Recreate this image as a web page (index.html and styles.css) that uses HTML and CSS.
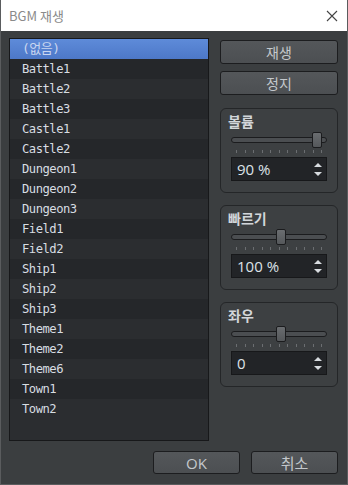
FILE: index.html
```html
<!DOCTYPE html>
<html>
	<head>
		<meta charset="utf-8">
		<title>BGM 재생</title>
		<link rel="stylesheet" href="styles.css">
	</head>
	<body>
		<div class = "window">
			<div class = "titlebar">
				<span class = "title">BGM 재생</span>
				<svg class = "close" width="12" height="12" viewBox="0 0 12 12">
					<path d="M1 1 L11 11 M11 1 L1 11" stroke="#444" stroke-width="1.1" fill="none"/>
				</svg>
			</div>

			<div class = "content">
				<!--The track list-->
				<ul class = "tracks">
					<li class = "selected">(없음)</li>
					<li>Battle1</li>
					<li>Battle2</li>
					<li>Battle3</li>
					<li>Castle1</li>
					<li>Castle2</li>
					<li>Dungeon1</li>
					<li>Dungeon2</li>
					<li>Dungeon3</li>
					<li>Field1</li>
					<li>Field2</li>
					<li>Ship1</li>
					<li>Ship2</li>
					<li>Ship3</li>
					<li>Theme1</li>
					<li>Theme2</li>
					<li>Theme6</li>
					<li>Town1</li>
					<li>Town2</li>
				</ul>

				<!--Controls-->
				<div class = "side">
					<button class = "btn">재생</button>
					<button class = "btn">정지</button>

					<div class = "group first">
						<div class = "label">볼륨</div>
						<div class = "slider">
							<div class = "groove"></div>
							<div class = "handle" style="left: 81px"></div>
						</div>
						<div class = "ticks"><i></i><i></i><i></i><i></i><i></i><i></i><i></i><i></i><i></i><i></i><i></i></div>
						<div class = "spin"><span>90 %</span><span class = "arrows"><b class = "up"></b><b class = "down"></b></span></div>
					</div>

					<div class = "group">
						<div class = "label">빠르기</div>
						<div class = "slider">
							<div class = "groove"></div>
							<div class = "handle" style="left: 45px"></div>
						</div>
						<div class = "ticks"><i></i><i></i><i></i><i></i><i></i><i></i><i></i><i></i><i></i><i></i><i></i></div>
						<div class = "spin"><span>100 %</span><span class = "arrows"><b class = "up"></b><b class = "down"></b></span></div>
					</div>

					<div class = "group">
						<div class = "label">좌우</div>
						<div class = "slider">
							<div class = "groove"></div>
							<div class = "handle" style="left: 45px"></div>
						</div>
						<div class = "ticks"><i></i><i></i><i></i><i></i><i></i><i></i><i></i><i></i><i></i><i></i><i></i></div>
						<div class = "spin"><span>0</span><span class = "arrows"><b class = "up"></b><b class = "down"></b></span></div>
					</div>
				</div>
			</div>

			<div class = "footer">
				<button class = "btn">OK</button>
				<button class = "btn">취소</button>
			</div>
		</div>
	</body>
</html>
```

FILE: styles.css
```css
body {
	margin: 0;
	font-family: "Noto Sans CJK KR", "Open Sans", sans-serif;
}

.window {
	width: 348px;
	height: 485px;
	box-sizing: border-box;
	border: 1px solid #5a5c5e;
	border-top: none;
	background-color: #3b3e40;
	display: flex;
	flex-direction: column;
}

/*Title bar*/
.titlebar {
	height: 31px;
	background-color: #ffffff;
	display: flex;
	align-items: center;
	justify-content: space-between;
	padding: 0 9px 0 8px;
	flex-shrink: 0;
}

.title {
	font-size: 13px;
	color: #8a8a8a;
}

/*Main area*/
.content {
	display: flex;
	padding: 7px 9px 0 8px;
	gap: 11px;
}

.tracks {
	list-style: none;
	margin: 0;
	padding: 0;
	width: 200px;
	height: 403px;
	box-sizing: border-box;
	border: 1px solid #17181a;
	background-color: #2b2d30;
	font-family: "DejaVu Sans Mono", "Noto Sans CJK KR", monospace;
	font-size: 12.2px;
	letter-spacing: -0.5px;
	color: #d8dde2;
}

.tracks li {
	height: 20px;
	line-height: 20px;
	padding-left: 12px;
	background-color: #2b2d30;
}

.tracks li:nth-child(even) {
	background-color: #25272a;
}

.tracks li.selected {
	background: linear-gradient(#5e8bd9, #4d78c8);
	color: #c9d6f0;
	font-size: 13px;
}

.side {
	width: 118px;
	margin-top: 2px;
	display: flex;
	flex-direction: column;
}

.btn {
	font-family: "Noto Sans CJK KR", "Open Sans", sans-serif;
	font-size: 14px;
	color: #c4c8cc;
	background: linear-gradient(#54575a, #4c4f52);
	border: 1px solid #1c1d1f;
	border-radius: 3px;
	height: 24px;
	padding: 0;
}

.side .btn + .btn {
	margin-top: 7px;
}

/*Group boxes*/
.group {
	height: 85px;
	box-sizing: border-box;
	border: 1px solid #242628;
	border-radius: 6px;
	background-color: #3d4042;
	margin-top: 12px;
	padding: 0 10px 0 10px;
	position: relative;
}

.group.first {
	margin-top: 13px;
}

.label {
	font-size: 14px;
	font-weight: bold;
	color: #d2d6da;
	line-height: 16px;
	margin-top: 4px;
	margin-left: -3px;
}

.slider {
	position: relative;
	height: 16px;
	margin-top: 3px;
}

.groove {
	position: absolute;
	left: 0;
	right: 0;
	top: 5px;
	height: 6px;
	box-sizing: border-box;
	border: 1px solid #1b1c1e;
	border-radius: 3px;
	background-color: #4b4e51;
}

.handle {
	position: absolute;
	top: 0;
	width: 10px;
	height: 16px;
	box-sizing: border-box;
	border: 1px solid #1b1c1e;
	border-radius: 2px;
	background: linear-gradient(#6a6d70, #55585b);
}

.ticks {
	display: flex;
	justify-content: space-between;
	padding: 0 5px;
	height: 3px;
	margin-top: 2px;
}

.ticks i {
	width: 1px;
	height: 3px;
	background-color: #6b6e71;
}

.spin {
	margin-top: 4px;
	height: 24px;
	box-sizing: border-box;
	border: 1px solid #17181a;
	background-color: #222427;
	display: flex;
	align-items: center;
	justify-content: space-between;
	padding: 0 4px 0 5px;
	font-family: "Open Sans", sans-serif;
	font-size: 15px;
	color: #dde2e8;
}

.arrows {
	display: flex;
	flex-direction: column;
	gap: 5px;
}

.arrows b {
	width: 0;
	height: 0;
	border-left: 4px solid transparent;
	border-right: 4px solid transparent;
}

.arrows .up {
	border-bottom: 4px solid #d8dce0;
}

.arrows .down {
	border-top: 4px solid #d8dce0;
}

/*Bottom buttons*/
.footer {
	display: flex;
	justify-content: flex-end;
	gap: 11px;
	padding: 10px 9px 0 0;
}

.footer .btn {
	width: 87px;
	height: 23px;
	font-family: "Open Sans", "Noto Sans CJK KR", sans-serif;
	font-size: 15px;
}
```
